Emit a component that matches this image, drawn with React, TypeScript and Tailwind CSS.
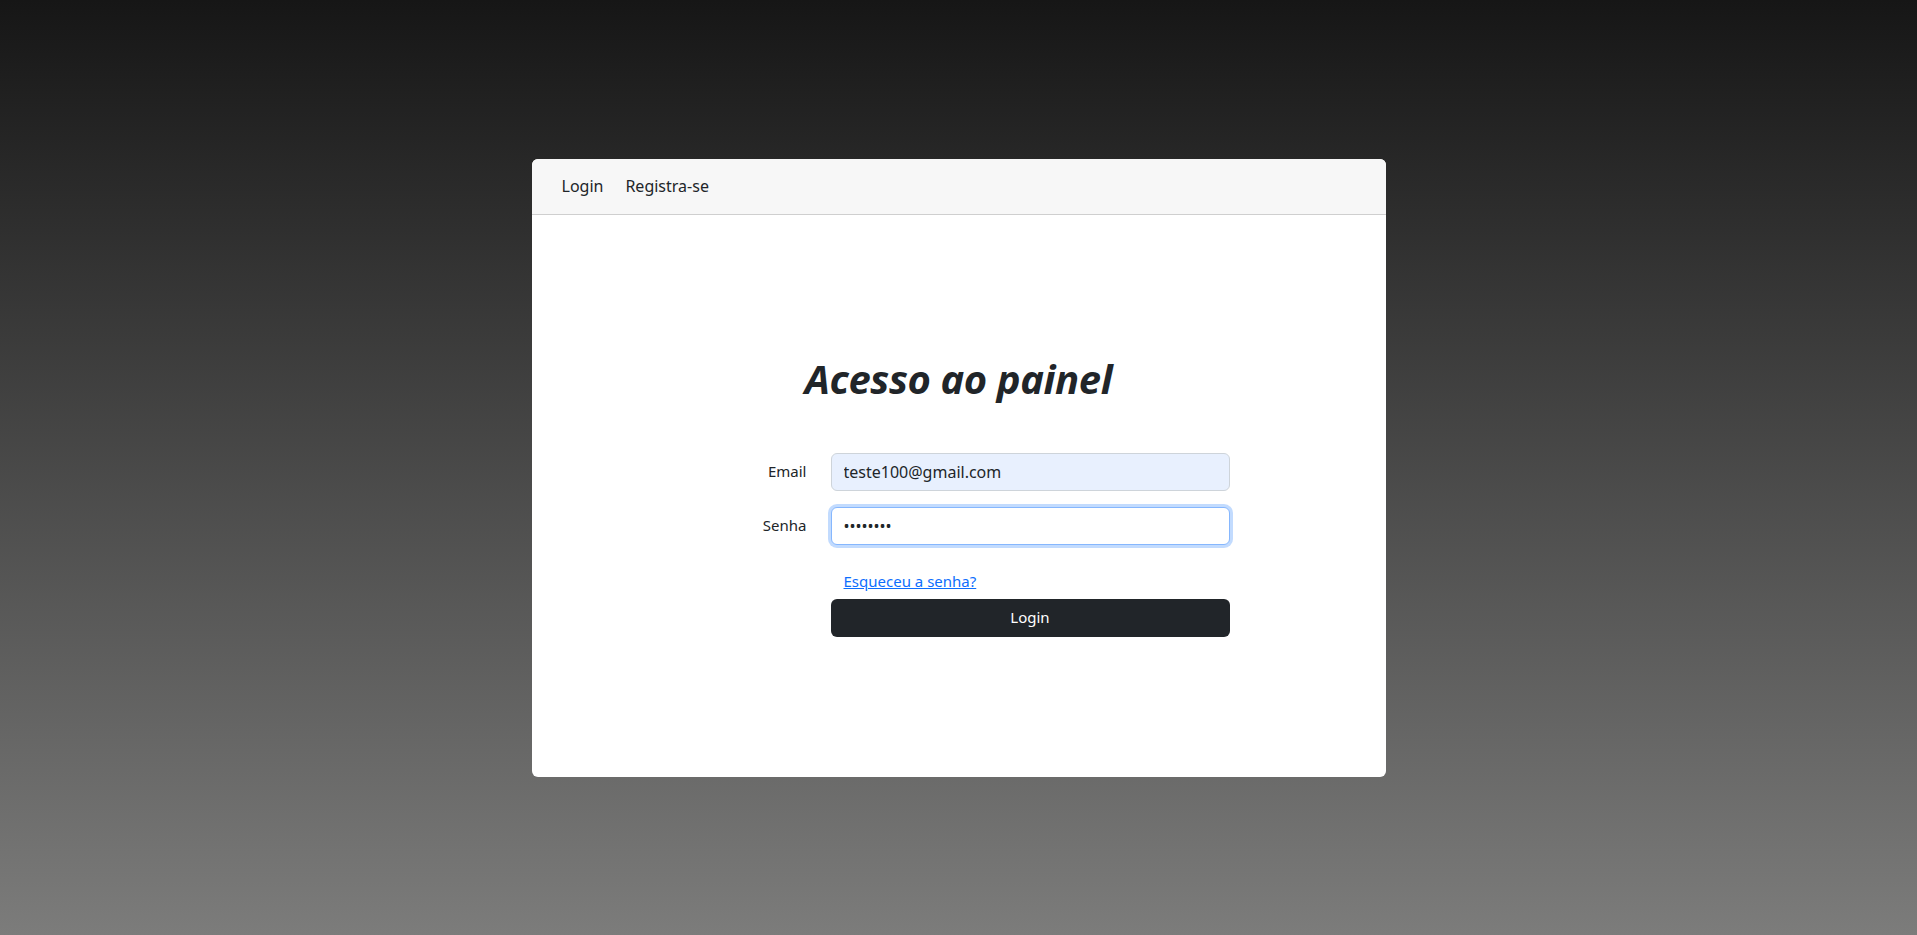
import { useState } from "react";

export default function App() {
  const [email, setEmail] = useState("teste100@gmail.com");
  const [senha, setSenha] = useState("12345678");

  return (
    <div className="min-h-screen w-full flex items-center justify-center bg-[linear-gradient(to_bottom,#161616,#7c7c7b)] font-['Noto_Sans',sans-serif] text-[#212529]">
      <div className="w-[854px] h-[618px] bg-white rounded-[6px] overflow-hidden flex flex-col">
        {/* Nav */}
        <nav className="h-[56px] bg-[#f7f7f7] border-b border-[#cfcfcf] flex items-center px-[30px] gap-[22px] text-[16px] shrink-0">
          <a href="#" className="text-[#212529]">Login</a>
          <a href="#" className="text-[#212529]">Registra-se</a>
        </nav>

        {/* Body */}
        <div className="flex-1 flex flex-col items-center justify-center">
          <h1 className="text-[40px] leading-[48px] font-bold italic tracking-[-0.4px] mb-[50px]">
            Acesso ao painel
          </h1>

          <form className="w-[540px] flex flex-col ml-[2px]" onSubmit={(e) => e.preventDefault()}>
            <div className="flex items-center gap-[24px]">
              <label className="w-[117px] text-right text-[15px]">Email</label>
              <input
                type="email"
                value={email}
                onChange={(e) => setEmail(e.target.value)}
                className="w-[399px] h-[38px] px-[12px] rounded-[6px] border border-[#ced4da] bg-[#e8f0fe] text-[16px] outline-none"
              />
            </div>
            <div className="flex items-center gap-[24px] mt-[16px]">
              <label className="w-[117px] text-right text-[15px]">Senha</label>
              <input
                type="password"
                value={senha}
                onChange={(e) => setSenha(e.target.value)}
                className="w-[399px] h-[38px] px-[12px] rounded-[6px] border border-[#86b7fe] bg-white text-[16px] outline-none shadow-[0_0_0_3px_rgba(13,110,253,0.25)]"
              />
            </div>
            <div className="ml-[141px] mt-[24px] pl-[13px] leading-[24px]">
              <a href="#" className="text-[#0d6efd] underline text-[15px]">Esqueceu a senha?</a>
            </div>
            <div className="ml-[141px] mt-[6px]">
              <button
                type="submit"
                className="w-[399px] h-[38px] rounded-[6px] bg-[#212529] text-white text-[15px]"
              >
                Login
              </button>
            </div>
          </form>
        </div>
      </div>
    </div>
  );
}
